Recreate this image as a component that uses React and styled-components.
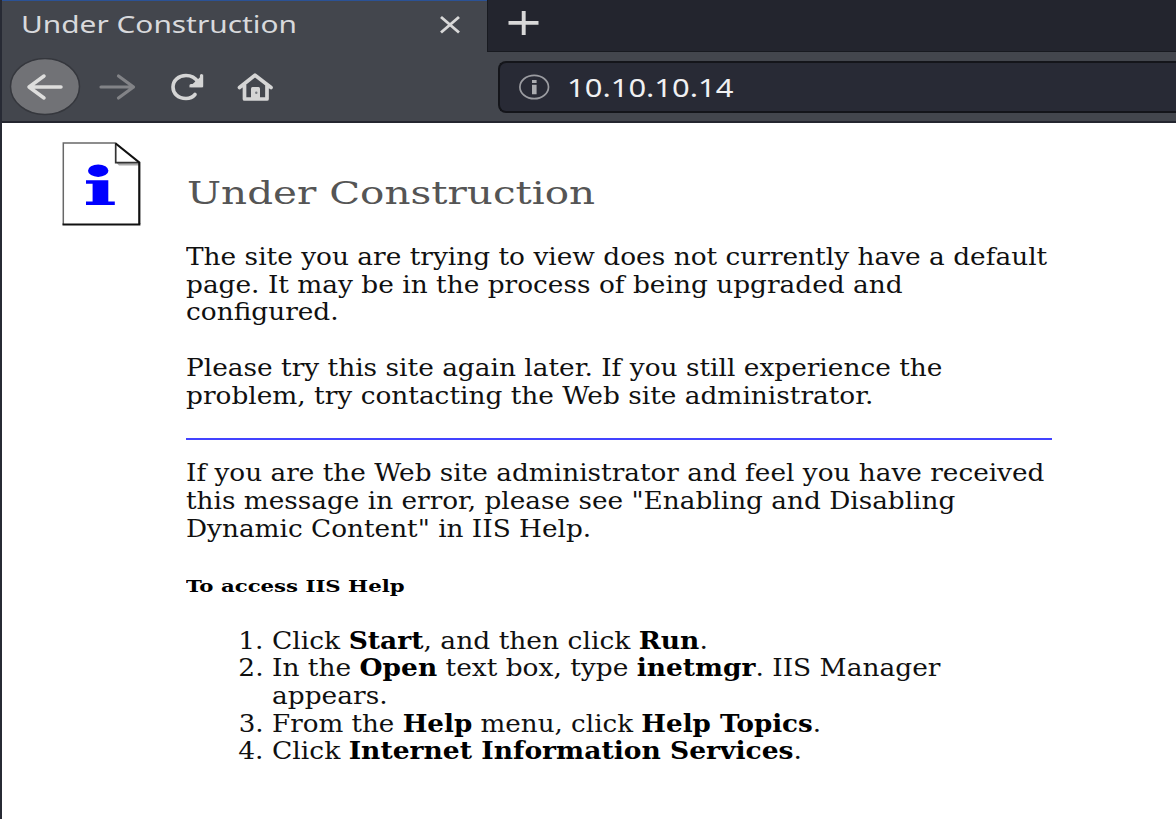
import React from "react";
import styled, { createGlobalStyle } from "styled-components";

const GlobalStyle = createGlobalStyle`
  * { box-sizing: border-box; }
  body { margin: 0; background: #fff; overflow: hidden; }
`;

const Window = styled.div`
  height: 819px;
  display: flex;
  flex-direction: column;
  border-left: 2px solid #272a34;
  background: #fff;
`;

const TabBar = styled.div`
  display: flex;
  height: 52px;
  background: #23252e;
`;

const Tab = styled.div`
  display: flex;
  justify-content: space-between;
  width: 485px;
  padding: 0 24px 0 19px;
  border-top: 1px solid #2b5296;
  background: #43464d;
`;

const TabTitle = styled.span`
  height: 34px;
  margin-top: 6px;
  font: 24px/34px "Noto Sans", sans-serif;
  color: #d8d9dc;
  white-space: nowrap;
  transform: scaleX(1.243);
  transform-origin: left;
`;

const CloseIcon = styled.svg`
  margin-top: 12px;
`;

const TabStrip = styled.div`
  flex: 1;
  border-left: 1px solid #181a20;
  border-bottom: 1px solid #181a20;
  padding: 9px 0 0 19px;
`;

const Toolbar = styled.div`
  display: flex;
  height: 71px;
  padding: 6px 0 0 7px;
  background: #43464d;
  border-bottom: 2px solid #24262f;
`;

const NavButtons = styled.div`
  display: flex;
  width: 489px;
`;

const AddressBar = styled.div`
  display: flex;
  flex: 1;
  height: 52px;
  margin-top: 3px;
  padding-left: 18px;
  gap: 17px;
  align-items: center;
  border: 2px solid #14151a;
  border-right: 0;
  border-radius: 8px 0 0 8px;
  background: #282a35;
`;

const Address = styled.span`
  font: 26px/36px "Noto Sans", sans-serif;
  color: #f0f0f2;
  transform: scaleX(1.19);
  transform-origin: left;
`;

const Page = styled.main`
  display: grid;
  grid-template-columns: 124px 866px;
  padding: 18px 0 0 60px;
  font-family: "DejaVu Serif", serif;
  color: #000;
`;

const Heading = styled.h1`
  width: max-content;
  height: 37px;
  margin: 34px 0 32px 1px;
  font-size: 32px;
  line-height: 37px;
  font-weight: 400;
  color: #555;
  transform: scaleX(1.264);
  transform-origin: left;
`;

const Paragraph = styled.p`
  width: max-content;
  margin: 0 0 ${(p) => p.$after}px;
  font-size: 23.4px;
  line-height: 27.7px;
  color: #101010;
  white-space: nowrap;
  transform: scaleX(${(p) => p.$stretch || 1.128});
  transform-origin: left;
`;

const Rule = styled.hr`
  height: 2px;
  margin: 0 0 20.5px;
  border: 0;
  background: #4343ff;
`;

const Subheading = styled.h2`
  width: max-content;
  height: 20px;
  margin: 0 0 31.9px;
  font-size: 17px;
  line-height: 20px;
  font-weight: 700;
  transform: scaleX(1.25);
  transform-origin: left;
`;

const Steps = styled.ol`
  margin: 0 0 0 86px;
  padding: 0;
  font-size: 23.4px;
  line-height: 27.7px;
  color: #101010;
  white-space: nowrap;
`;

const Step = styled.li`
  width: max-content;
  height: ${(p) => (p.$lines || 1) * 27.7}px;
  transform: scaleX(${(p) => p.$stretch});
  transform-origin: left;

  b { color: #000; line-height: 0; }
`;

function Back() {
  return (
    <svg width="72" height="60" viewBox="0 0 72 60" fill="none">
      <ellipse cx="36" cy="28.5" rx="34.5" ry="28" fill="#717276" stroke="#35373d" strokeWidth="1.5" />
      <path d="M52 29H20M35 18 20 29l15 11" stroke="#dededd" strokeWidth="3.5" strokeLinecap="round" strokeLinejoin="round" />
    </svg>
  );
}

function Forward() {
  return (
    <svg width="72" height="60" viewBox="0 0 72 60" fill="none">
      <path d="M20 29h32M37.500 18l15 11-15 11" stroke="#828387" strokeWidth="3.2" strokeLinecap="round" strokeLinejoin="round" />
    </svg>
  );
}

function Reload() {
  return (
    <svg width="75" height="60" viewBox="1.5 0 75 60" fill="none">
      <path d="M43.5 36.5C41 39.5 37.5 40.5 34.5 40.5c-8 0-13-5-13-11.5s5.500-11.500 13-11.500c5.500 0 9.500 2.500 12 6.500" stroke="#d5d5d5" strokeWidth="3.6" strokeLinecap="round" />
      <path d="M51.600 16.500v12.800H37.500z" fill="#d5d5d5" />
      <path d="M50 17.500v10.200H39.500" stroke="#d5d5d5" strokeWidth="3.200" strokeLinecap="round" strokeLinejoin="round" />
    </svg>
  );
}

function Home() {
  return (
    <svg width="60" height="60" viewBox="0 0 60 60" fill="none">
      <path d="M11.500 29.500 27 17.200 43 29.500M16.500 27v14h22.500V27" stroke="#d5d5d5" strokeWidth="3.700" strokeLinecap="round" strokeLinejoin="round" />
      <path d="M23 41V30.500q0-1.500 1.500-1.500h6q1.500 0 1.500 1.500v10.500z" fill="#d5d5d5" />
      <circle cx="28.300" cy="34.800" r="1.200" fill="#777a80" />
    </svg>
  );
}

function SiteInfo() {
  return (
    <svg width="32" height="26" viewBox="0 0 32 26" fill="none">
      <ellipse cx="16.200" cy="13" rx="14.300" ry="11.700" stroke="#9b9ca1" strokeWidth="1.700" />
      <path d="M14 10.800h4.600v9.400H14zM14 6.100h4.600v2.900H14z" fill="#abacb0" />
    </svg>
  );
}

function PageIcon() {
  return (
    <svg width="80" height="86" viewBox="0 0 80 86">
      <path d="M1 2h54l23 19v62.500H1z" fill="#fff" />
      <path d="M1.300 83.500V2h53" fill="none" stroke="#686868" strokeWidth="1.500" />
      <path d="M54.500 22 77 22.500v2H57z" fill="#aaa" />
      <path d="M53.700 2v19.700h23.800" fill="#fff" stroke="#333" strokeWidth="1.700" />
      <path d="M53.700 2.500 77.300 21.500V83" fill="none" stroke="#111" strokeWidth="2.200" />
      <path d="M.5 83.500h77.900" stroke="#111" strokeWidth="2.200" />
      <ellipse cx="36.200" cy="29.700" rx="10.200" ry="6.200" fill="#00f" />
      <path d="M24 39.300h22.300v21.200H52.800v3.600H24v-3.600h6.600V42.800H24z" fill="#00f" />
    </svg>
  );
}

export default function App() {
  return (
    <>
      <GlobalStyle />
      <Window>
        <TabBar>
          <Tab>
            <TabTitle>Under Construction</TabTitle>
            <CloseIcon width="26" height="24" viewBox="0 0 26 24" fill="none">
              <path d="M4 4 22 19.500M22 4 4 19.500" stroke="#d8d8d8" strokeWidth="2.900" />
            </CloseIcon>
          </Tab>
          <TabStrip>
            <svg width="34" height="28" viewBox="0 0 34 28">
              <path d="M1.500 13.900h30M16.700 2v24" stroke="#d8d8d8" strokeWidth="3.900" />
            </svg>
          </TabStrip>
        </TabBar>
        <Toolbar>
          <NavButtons>
            <Back />
            <Forward />
            <Reload />
            <Home />
          </NavButtons>
          <AddressBar>
            <SiteInfo />
            <Address>10.10.10.14</Address>
          </AddressBar>
        </Toolbar>
        <Page>
          <PageIcon />
          <article>
            <Heading>Under Construction</Heading>
            <Paragraph $after={27.7}>
              The site you are trying to view does not currently have a default<br />
              page. It may be in the process of being upgraded and<br />
              configured.
            </Paragraph>
            <Paragraph $after={27.5}>
              Please try this site again later. If you still experience the<br />
              problem, try contacting the Web site administrator.
            </Paragraph>
            <Rule />
            <Paragraph $after={32.5} $stretch={1.125}>
              If you are the Web site administrator and feel you have received<br />
              this message in error, please see "Enabling and Disabling<br />
              Dynamic Content" in IIS Help.
            </Paragraph>
            <Subheading>To access IIS Help</Subheading>
            <Steps>
              <Step $stretch={1.134}>Click <b>Start</b>, and then click <b>Run</b>.</Step>
              <Step $stretch={1.13} $lines={2}>In the <b>Open</b> text box, type <b>inetmgr</b>. IIS Manager<br />appears.</Step>
              <Step $stretch={1.118}>From the <b>Help</b> menu, click <b>Help Topics</b>.</Step>
              <Step $stretch={1.135}>Click <b>Internet Information Services</b>.</Step>
            </Steps>
          </article>
        </Page>
      </Window>
    </>
  );
}
